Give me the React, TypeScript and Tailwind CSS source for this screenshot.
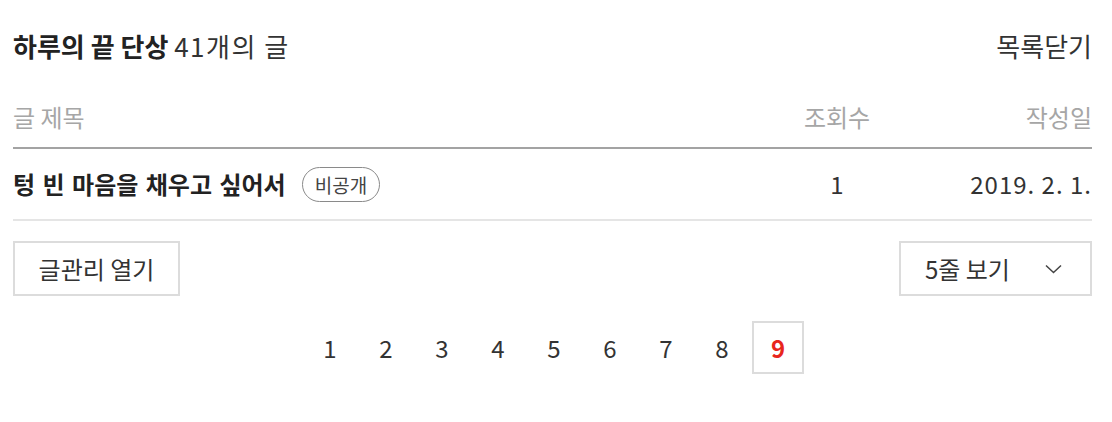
import React from "react";

const font = { fontFamily: '"Noto Sans CJK KR", "Noto Sans", sans-serif' };

export default function App() {
  const pages = [1, 2, 3, 4, 5, 6, 7, 8, 9];
  return (
    <div className="w-[1112px] h-[422px] bg-white text-[#333]" style={font}>
      <div className="mx-[13px] w-[1079px]">
        {/* title row */}
        <div className="flex h-[92px] items-center justify-between pb-[2px]">
          <div className="text-[26px]">
            <span className="font-bold text-[#222]">하루의 끝 단상</span>{" "}
            <span className="tracking-[1.5px]">41개의 글</span>
          </div>
          <div className="text-[26px]">목록닫기</div>
        </div>
        {/* header */}
        <div className="flex h-[57px] items-center border-b-2 border-[#a3a3a3] pb-[5px] text-[24px] text-[#a6a6a6]">
          <div className="flex-1">글 제목</div>
          <div className="w-[90px] text-center">조회수</div>
          <div className="w-[210px] text-right">작성일</div>
        </div>
        {/* post row */}
        <div className="flex h-[72px] items-center border-b-2 border-[#e5e5e5] text-[24px]">
          <div className="flex flex-1 items-center">
            <span className="font-bold text-[#222] [word-spacing:2px]">텅 빈 마음을 채우고 싶어서</span>
            <span className="ml-[16px] flex h-[35px] items-center rounded-full border-[1.5px] border-[#8a8a8a] px-[12px] text-[19px] leading-none text-[#444]">
              비공개
            </span>
          </div>
          <div className="w-[90px] text-center">1</div>
          <div className="w-[210px] text-right tracking-[1px]">2019. 2. 1.</div>
        </div>
        {/* buttons */}
        <div className="mt-[20px] flex items-center justify-between">
          <button className="h-[55px] w-[167px] border-2 border-[#dcdcdc] bg-white text-[24px] text-[#333]">
            글관리 열기
          </button>
          <button className="flex h-[55px] w-[193px] items-center justify-between border-2 border-[#dcdcdc] bg-white pl-[24px] pr-[28px] text-[24px] text-[#333]">
            <span>5줄 보기</span>
            <svg width="17" height="10" viewBox="0 0 17 10" fill="none">
              <path d="M1 1.5 L8.5 8.5 L16 1.5" stroke="#444" strokeWidth="1.5" />
            </svg>
          </button>
        </div>
        {/* pagination */}
        <div className="mt-[25px] flex justify-center gap-[4px] pl-[3px]">
          {pages.map((p) =>
            p === 9 ? (
              <div
                key={p}
                className="flex h-[53px] w-[52px] items-center justify-center border-2 border-[#dcdcdc] text-[24px] font-bold text-[#e8261c]"
              >
                {p}
              </div>
            ) : (
              <div key={p} className="flex h-[53px] w-[52px] items-center justify-center text-[24px]">
                {p}
              </div>
            )
          )}
        </div>
      </div>
    </div>
  );
}
